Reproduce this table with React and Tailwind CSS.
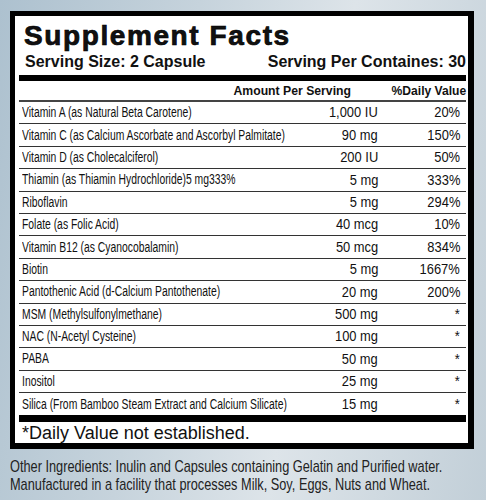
const rows = [
  ['Vitamin A (as Natural Beta Carotene)', '1,000 IU', '20%'],
  ['Vitamin C (as Calcium Ascorbate and Ascorbyl Palmitate)', '90 mg', '150%'],
  ['Vitamin D (as Cholecalciferol)', '200 IU', '50%'],
  ['Thiamin (as Thiamin Hydrochloride)5 mg333%', '5 mg', '333%'],
  ['Riboflavin', '5 mg', '294%'],
  ['Folate (as Folic Acid)', '40 mcg', '10%'],
  ['Vitamin B12 (as Cyanocobalamin)', '50 mcg', '834%'],
  ['Biotin', '5 mg', '1667%'],
  ['Pantothenic Acid (d-Calcium Pantothenate)', '20 mg', '200%'],
  ['MSM (Methylsulfonylmethane)', '500 mg', '*'],
  ['NAC (N-Acetyl Cysteine)', '100 mg', '*'],
  ['PABA', '50 mg', '*'],
  ['Inositol', '25 mg', '*'],
  ['Silica (From Bamboo Steam Extract and Calcium Silicate)', '15 mg', '*'],
];

export default function App() {
  return (
    <div className="w-[486px] h-[500px] overflow-hidden bg-[linear-gradient(100deg,#adc1cf_0%,#c6d3dc_35%,#dde4e9_62%,#c2cfd8_100%)] font-['Liberation_Sans',Arial,sans-serif] text-[#111]">
      <div className="ml-[10px] mt-[11px] w-[464px] h-[438px] border-[5px] border-r-[6px] border-b-[6px] border-black bg-white pl-[4px] pr-[2px] flex flex-col">
        <h1 className="pl-[5px] pt-[3px] h-[34px] text-[28px] leading-[34px] font-bold tracking-[1.6px] [-webkit-text-stroke:0.7px_#000]">Supplement Facts</h1>
        <div className="flex justify-between items-end h-[19px] mt-[2px] pl-[6px] text-[16px] leading-[19px] font-bold">
          <span>Serving Size: 2 Capsule</span>
          <span>Serving Per Containes: 30</span>
        </div>
        <div className="h-[6px] bg-black mt-[4px]" />
        <div className="flex justify-end items-center h-[20px] text-[13px] font-bold whitespace-nowrap">
          <span className="inline-block scale-x-[0.94] origin-right">Amount Per Serving</span>
          <span className="w-[115px] text-right">
            <span className="inline-block scale-x-[0.93] origin-right">%Daily Value</span>
          </span>
        </div>
        <div className="h-[2px] bg-[#444]" />
        {rows.map(([name, amount, dv], i) => (
          <div
            key={name}
            className={`flex items-center h-[22.4px] pl-[3px] pr-[6px] whitespace-nowrap ${i < rows.length - 1 ? 'border-b-[1.5px] border-[#333]' : ''}`}
          >
            <div className="flex-1 min-w-0 text-[14px]">
              <span className="inline-block scale-x-[0.74] origin-left">{name}</span>
            </div>
            <div className="w-[60px] text-right text-[15px]">
              <span className="inline-block scale-x-[0.86] origin-right">{amount}</span>
            </div>
            <div className="w-[82px] text-right text-[15px]">
              <span className="inline-block scale-x-[0.86] origin-right">{dv}</span>
            </div>
          </div>
        ))}
        <div className="h-[7px] bg-black" />
        <div className="pl-[3px] pt-[1px] text-[18px] leading-[20px]">*Daily Value not established.</div>
      </div>
      <div className="pl-[10px] pt-[9px] text-[17px] leading-[18px] text-[#222] whitespace-nowrap">
        <p><span className="inline-block scale-x-[0.75] origin-left">Other Ingredients: Inulin and Capsules containing Gelatin and Purified water.</span></p>
        <p><span className="inline-block scale-x-[0.75] origin-left">Manufactured in a facility that processes Milk, Soy, Eggs, Nuts and Wheat.</span></p>
      </div>
    </div>
  );
}
